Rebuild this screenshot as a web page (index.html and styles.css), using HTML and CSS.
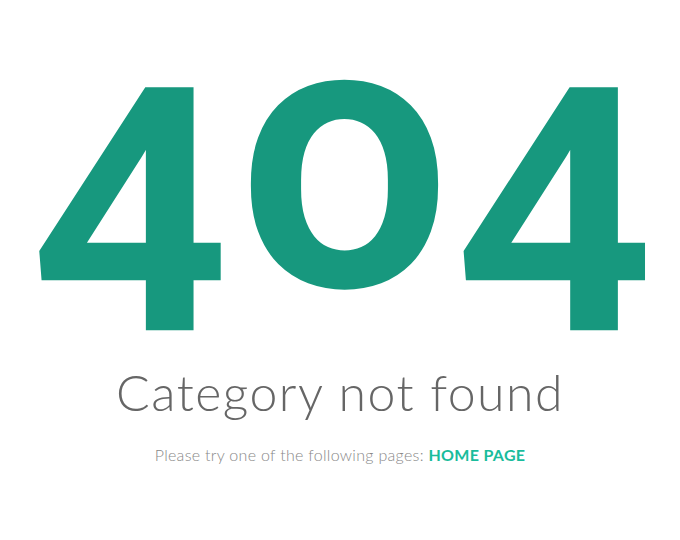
FILE: index.html
```html
<!DOCTYPE html>
<html lang="en">
<head>
<meta charset="utf-8">
<title>404 - Category not found</title>
<link rel="stylesheet" href="styles.css">
</head>
<body>
<main class="page">
  <h1 class="code"><span class="d four">4</span><span class="d zero">0</span><span class="d four">4</span></h1>
  <h2 class="title">Category not found</h2>
  <p class="hint">Please try one of the following pages: <a class="link" href="#">HOME PAGE</a></p>
</main>
</body>
</html>
```
FILE: styles.css
```css
html,body{margin:0;padding:0;background:#fff}
.page{display:flex;flex-direction:column;align-items:center;padding-top:14px}
.code{margin:0;display:flex;justify-content:center;align-items:flex-start;font-family:Roboto,sans-serif;font-weight:700;line-height:300px;height:300px;color:#17987e;font-variant-numeric:oldstyle-nums}
.d{display:block}
.four{font-size:339px}
.zero{font-size:357px;margin:0 8px 0 17px}
.title{margin:48px 0 0;font-family:Lato,sans-serif;font-weight:300;font-size:50px;line-height:60px;color:#666;letter-spacing:1.5px}
.hint{margin:23px 0 0;font-family:Lato,sans-serif;font-weight:300;font-size:16px;color:#888;letter-spacing:0.3px}
.link{color:#1abc9c;font-weight:700;text-decoration:none}
```
